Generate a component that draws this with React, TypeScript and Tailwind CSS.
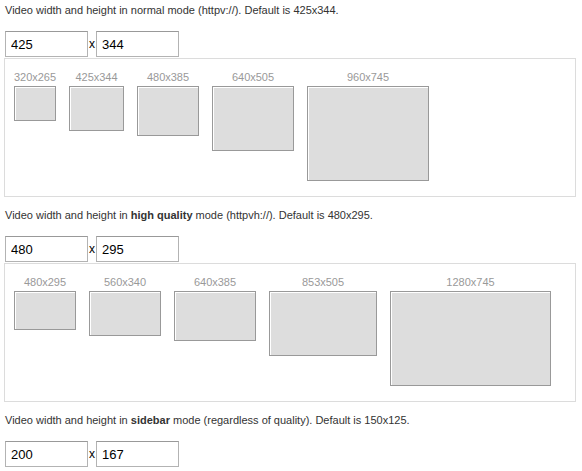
import React from 'react';

type Size = { label: string; w: number; h: number };

const sections: {
    intro: React.ReactNode;
    width: string;
    height: string;
    sizes?: Size[];
}[] = [
    {
        intro: <>Video width and height in normal mode (httpv://). Default is 425x344.</>,
        width: '425',
        height: '344',
        sizes: [
            { label: '320x265', w: 42, h: 35 },
            { label: '425x344', w: 55, h: 45 },
            { label: '480x385', w: 62, h: 50 },
            { label: '640x505', w: 82, h: 65 },
            { label: '960x745', w: 122, h: 95 },
        ],
    },
    {
        intro: <>Video width and height in <b>high quality</b> mode (httpvh://). Default is 480x295.</>,
        width: '480',
        height: '295',
        sizes: [
            { label: '480x295', w: 62, h: 39 },
            { label: '560x340', w: 72, h: 45 },
            { label: '640x385', w: 82, h: 50 },
            { label: '853x505', w: 108, h: 65 },
            { label: '1280x745', w: 161, h: 95 },
        ],
    },
    {
        intro: <>Video width and height in <b>sidebar</b> mode (regardless of quality). Default is 150x125.</>,
        width: '200',
        height: '167',
    },
];

const SizeInput = ({ value }: { value: string }) => (
    <input
        defaultValue={value}
        className="w-[83px] h-[26px] pl-[5px] bg-white border border-[#b3b3b3] border-t-[#999] text-[13px] text-black outline-none"
    />
);

const Presets = ({ sizes }: { sizes: Size[] }) => (
    <div className="mt-[1px] w-[572px] h-[139px] border border-[#dcdcdc] pt-[11px] pl-[9px] flex items-start gap-[13px]">
        {sizes.map((s) => (
            <div key={s.label} className="flex flex-col items-center" style={{ width: s.w }}>
                <span className="h-[14px] leading-[14px] text-[11px] text-[#999] whitespace-nowrap">{s.label}</span>
                <div
                    className="mt-[2px] bg-[#dddddd] border border-[#999] shadow-[inset_1px_1px_0_#fff]"
                    style={{ width: s.w, height: s.h }}
                />
            </div>
        ))}
    </div>
);

export default function App() {
    return (
        <div className="w-[582px] h-[471px] overflow-hidden bg-white pl-[4px] font-['Liberation_Sans',Arial,sans-serif] text-[#333]">
            {sections.map((sec, i) => (
                <div key={i}>
                    <p className={`${i === 0 ? 'mt-[3px]' : 'mt-[11px]'} pl-[1px] text-[11px] leading-[14px]`}>{sec.intro}</p>
                    <div className="mt-[14px] pl-[1px] flex items-center">
                        <SizeInput value={sec.width} />
                        <span className="w-[8px] pl-[1px] text-[12px] text-black">x</span>
                        <SizeInput value={sec.height} />
                    </div>
                    {sec.sizes && <Presets sizes={sec.sizes} />}
                </div>
            ))}
        </div>
    );
}
